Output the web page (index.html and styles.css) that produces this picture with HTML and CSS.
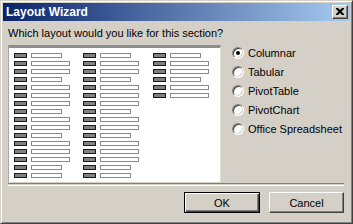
FILE: index.html
```html
<!DOCTYPE html>
<html>
<head>
<meta charset="utf-8">
<link rel="stylesheet" href="styles.css">
</head>
<body>
<div class="dialog">
  <div class="titlebar">
    <span class="title">Layout Wizard</span>
    <span class="close"><svg width="8" height="7" viewBox="0 0 8 7"><path d="M0 0h2l2 2 2-2h2v1l-2.5 2.5L8 6v1H6L4 5 2 7H0V6l2.5-2.5L0 1z" fill="#000"/></svg></span>
  </div>
  <div class="content">
    <div class="question">Which layout would you like for this section?</div>
    <div class="main">
      <div class="preview">
        <div class="col">
          <div class="row"><i class="key"></i><i class="fld s"></i></div>
          <div class="row"><i class="key"></i><i class="fld"></i></div>
          <div class="row"><i class="key"></i><i class="fld"></i></div>
          <div class="row"><i class="key"></i><i class="fld s"></i></div>
          <div class="row"><i class="key"></i><i class="fld"></i></div>
          <div class="row"><i class="key"></i><i class="fld"></i></div>
          <div class="row"><i class="key"></i><i class="fld"></i></div>
          <div class="row"><i class="key"></i><i class="fld s"></i></div>
          <div class="row"><i class="key"></i><i class="fld"></i></div>
          <div class="row"><i class="key"></i><i class="fld"></i></div>
          <div class="row"><i class="key"></i><i class="fld s"></i></div>
          <div class="row"><i class="key"></i><i class="fld"></i></div>
          <div class="row"><i class="key"></i><i class="fld"></i></div>
          <div class="row"><i class="key"></i><i class="fld"></i></div>
          <div class="row"><i class="key"></i><i class="fld s"></i></div>
          <div class="row"><i class="key"></i><i class="fld s"></i></div>
        </div>
        <div class="col">
          <div class="row"><i class="key"></i><i class="fld s"></i></div>
          <div class="row"><i class="key"></i><i class="fld"></i></div>
          <div class="row"><i class="key"></i><i class="fld"></i></div>
          <div class="row"><i class="key"></i><i class="fld s"></i></div>
          <div class="row"><i class="key"></i><i class="fld"></i></div>
          <div class="row"><i class="key"></i><i class="fld"></i></div>
          <div class="row"><i class="key"></i><i class="fld"></i></div>
          <div class="row"><i class="key"></i><i class="fld s"></i></div>
          <div class="row"><i class="key"></i><i class="fld"></i></div>
          <div class="row"><i class="key"></i><i class="fld"></i></div>
          <div class="row"><i class="key"></i><i class="fld s"></i></div>
          <div class="row"><i class="key"></i><i class="fld"></i></div>
          <div class="row"><i class="key"></i><i class="fld"></i></div>
          <div class="row"><i class="key"></i><i class="fld"></i></div>
          <div class="row"><i class="key"></i><i class="fld s"></i></div>
          <div class="row"><i class="key"></i><i class="fld s"></i></div>
        </div>
        <div class="col">
          <div class="row"><i class="key"></i><i class="fld s"></i></div>
          <div class="row"><i class="key"></i><i class="fld"></i></div>
          <div class="row"><i class="key"></i><i class="fld"></i></div>
          <div class="row"><i class="key"></i><i class="fld s"></i></div>
          <div class="row"><i class="key"></i><i class="fld"></i></div>
          <div class="row"><i class="key"></i><i class="fld"></i></div>
        </div>
      </div>
      <div class="options">
        <div class="opt"><span class="radio on"></span>Columnar</div>
        <div class="opt"><span class="radio"></span>Tabular</div>
        <div class="opt"><span class="radio"></span>PivotTable</div>
        <div class="opt"><span class="radio"></span>PivotChart</div>
        <div class="opt"><span class="radio"></span>Office Spreadsheet</div>
      </div>
    </div>
    <div class="sep"></div>
    <div class="buttons">
      <div class="btn default">OK</div>
      <div class="btn">Cancel</div>
    </div>
  </div>
</div>
</body>
</html>
```
FILE: styles.css
```css
html, body {
  margin: 0;
  padding: 0;
  background: #d4d0c8;
}
.dialog {
  width: 353px;
  height: 224px;
  box-sizing: border-box;
  background: #d4d0c8;
  border: 1px solid;
  border-color: #d4d0c8 #404040 #404040 #d4d0c8;
  box-shadow: inset 1px 1px #ffffff, inset -1px -1px #808080;
  padding: 2px;
  font-family: "Liberation Sans", Arial, sans-serif;
  font-size: 11px;
  color: #000;
  display: flex;
  flex-direction: column;
}
.titlebar {
  height: 18px;
  flex: none;
  background: linear-gradient(to right, #0a246a, #a6caf0);
  display: flex;
  align-items: center;
  justify-content: space-between;
  padding-left: 3px;
}
.title {
  color: #fff;
  font-weight: bold;
  font-size: 12px;
  font-family: "Liberation Sans", Arial, sans-serif;
}
.close {
  width: 16px;
  height: 14px;
  box-sizing: border-box;
  margin-right: 2px;
  background: #d4d0c8;
  border: 1px solid;
  border-color: #fff #404040 #404040 #fff;
  box-shadow: inset -1px -1px #808080;
  display: flex;
  align-items: center;
  justify-content: center;
  padding: 0 1px 1px 0;
}
.close svg { display: block; }
.content {
  padding: 0 6px 0 5px;
  display: flex;
  flex-direction: column;
}
.question {
  margin-top: 6px;
  line-height: 13px;
  height: 13px;
}
.main {
  display: flex;
  margin-top: 3px;
}
.preview {
  margin-top: 2px;
  width: 213px;
  height: 137px;
  box-sizing: border-box;
  background: #fff;
  border-top: 3px solid #8e8e8e;
  border-left: 1px solid #a8a8a8;
  border-right: 1px solid #e0ded8;
  padding: 5px 0 0 5px;
  display: grid;
  grid-template-columns: 69px 70px auto;
  align-items: start;
}
.col {
  display: flex;
  flex-direction: column;
  gap: 3px;
}
.row {
  display: flex;
  gap: 4px;
  height: 5px;
}
.key {
  display: block;
  width: 13px;
  height: 5px;
  box-sizing: border-box;
  border: 1px solid #1a1a1a;
  background: #808080;
}
.fld {
  display: block;
  width: 39px;
  height: 5px;
  box-sizing: border-box;
  border: 1px solid #8a8a8a;
  background: #fff;
}
.fld.s { width: 31px; }
.options {
  margin-left: 11px;
  display: flex;
  flex-direction: column;
}
.opt {
  height: 19px;
  display: flex;
  align-items: center;
  gap: 4px;
}
.radio {
  width: 12px;
  height: 12px;
  box-sizing: border-box;
  border-radius: 50%;
  border: 1px solid;
  border-color: #808080 #ffffff #ffffff #808080;
  box-shadow: inset 1px 1px #404040, inset -1px -1px #d4d0c8;
  background: #fff;
  display: flex;
  align-items: center;
  justify-content: center;
}
.radio.on::after {
  content: "";
  width: 4px;
  height: 4px;
  border-radius: 50%;
  background: #000;
}
.sep {
  margin-top: 1px;
  height: 1px;
  border-top: 1px solid #808080;
  border-bottom: 1px solid #fff;
}
.buttons {
  margin-top: 6px;
  display: flex;
  justify-content: flex-end;
  gap: 9px;
}
.btn {
  width: 75px;
  height: 21px;
  box-sizing: border-box;
  border: 1px solid;
  border-color: #fff #404040 #404040 #fff;
  box-shadow: inset -1px -1px #808080;
  display: flex;
  align-items: center;
  justify-content: center;
}
.btn.default {
  width: 76px;
  border: 1px solid #000;
  box-shadow: inset 1px 1px #fff, inset -1px -1px #404040, inset -2px -2px #808080;
}
```
